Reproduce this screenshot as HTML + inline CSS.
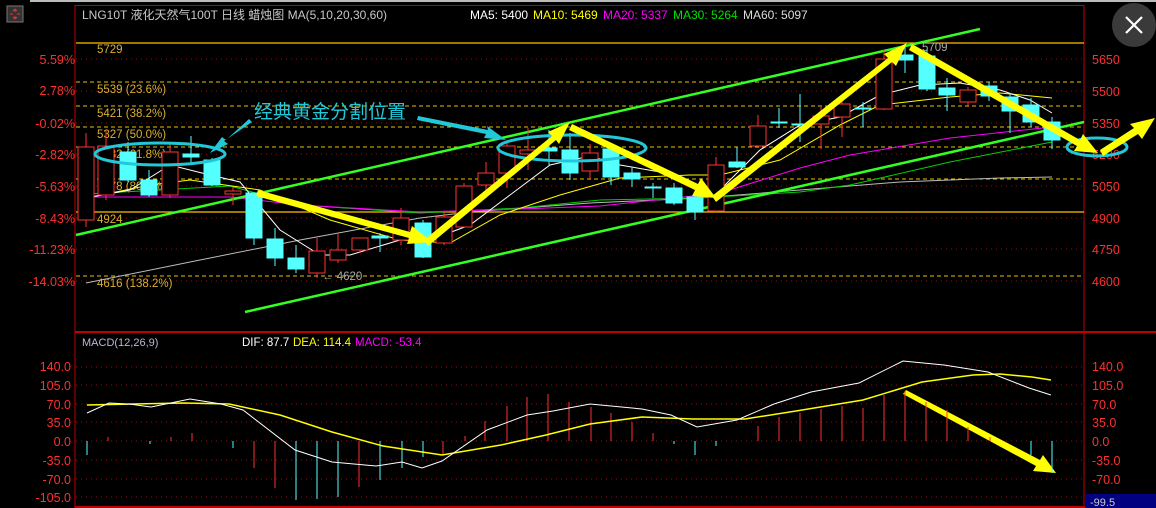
<!DOCTYPE html>
<html><head><meta charset="utf-8"><style>
html,body{margin:0;padding:0;background:#000;width:1156px;height:508px;overflow:hidden}
svg{display:block}
text{font-family:"Liberation Sans","Noto Sans CJK SC",sans-serif}
</style></head><body>
<svg width="1156" height="508" viewBox="0 0 1156 508" xmlns="http://www.w3.org/2000/svg">
<rect width="1156" height="508" fill="#000"/>
<rect x="30" y="0" width="1126" height="2" fill="#bbb"/>
<!-- left icon -->
<rect x="7" y="6" width="16" height="16" fill="#333" stroke="#777"/>
<path d="M15 9v3M15 16v3M10 14h3M17 14h3M15 9l-2 2M15 9l2 2M15 19l-2-2M15 19l2-2" stroke="#e33" stroke-width="1" fill="none"/>
<!-- borders -->
<g stroke="#c00000" fill="none">
<line x1="75" y1="5" x2="75" y2="508"/>
<line x1="1084" y1="5" x2="1084" y2="508"/>
<line x1="75" y1="5.5" x2="1084" y2="5.5"/>
<line x1="75" y1="332" x2="1156" y2="332" stroke-width="2"/>
<line x1="75" y1="507" x2="1156" y2="507" stroke-width="2"/>
</g>
<!-- red dotted grid -->
<g stroke="#b00000" stroke-dasharray="1,4" stroke-width="1">
<line x1="76" y1="59" x2="1084" y2="59"/><line x1="76" y1="91" x2="1084" y2="91"/>
<line x1="76" y1="123" x2="1084" y2="123"/><line x1="76" y1="154" x2="1084" y2="154"/>
<line x1="76" y1="186" x2="1084" y2="186"/><line x1="76" y1="218" x2="1084" y2="218"/>
<line x1="76" y1="249" x2="1084" y2="249"/><line x1="76" y1="281" x2="1084" y2="281"/>
<line x1="76" y1="367" x2="1084" y2="367"/><line x1="76" y1="385" x2="1084" y2="385"/>
<line x1="76" y1="404" x2="1084" y2="404"/><line x1="76" y1="422" x2="1084" y2="422"/>
<line x1="76" y1="441" x2="1084" y2="441"/><line x1="76" y1="460" x2="1084" y2="460"/>
<line x1="76" y1="479" x2="1084" y2="479"/><line x1="76" y1="497" x2="1084" y2="497"/>
</g>
<!-- fib lines -->
<g stroke="#ffc000" stroke-width="1.2">
<line x1="76" y1="43" x2="1084" y2="43"/><line x1="76" y1="212" x2="1084" y2="212"/>
</g>
<g stroke="#e8c000" stroke-dasharray="4,3" stroke-width="1">
<line x1="76" y1="82" x2="1084" y2="82"/><line x1="76" y1="106" x2="1084" y2="106"/>
<line x1="76" y1="127" x2="1084" y2="127"/><line x1="76" y1="147" x2="1084" y2="147"/>
<line x1="76" y1="179" x2="1084" y2="179"/><line x1="76" y1="276" x2="1084" y2="276"/>
</g>
<g font-size="11.5" fill="#d8b030">
<text x="97" y="53">5729</text><text x="97" y="93">5539 (23.6%)</text>
<text x="97" y="117">5421 (38.2%)</text><text x="97" y="138">5327 (50.0%)</text>
<text x="97" y="158">5232 (61.8%)</text><text x="97" y="190">5078 (80.9%)</text>
<text x="97" y="223">4924</text><text x="97" y="287">4616 (138.2%)</text>
</g>
<text x="322" y="280" font-size="11.5" fill="#aaa">← 4620</text>
<text x="922" y="51" font-size="11.5" fill="#aaa">5709</text>
<!-- axis labels -->
<g font-size="12.5" fill="#ff3030" text-anchor="end">
<text x="75" y="64">5.59%</text><text x="75" y="95">2.78%</text><text x="75" y="128">-0.02%</text>
<text x="75" y="159">-2.82%</text><text x="75" y="191">-5.63%</text><text x="75" y="223">-8.43%</text>
<text x="75" y="254">-11.23%</text><text x="75" y="286">-14.03%</text>
<text x="71" y="371">140.0</text><text x="71" y="390">105.0</text><text x="71" y="409">70.0</text>
<text x="71" y="427">35.0</text><text x="71" y="446">0.0</text><text x="71" y="465">-35.0</text>
<text x="71" y="484">-70.0</text><text x="71" y="502">-105.0</text>
</g>
<g font-size="12.5" fill="#ff3030">
<text x="1092" y="64">5650</text><text x="1092" y="96">5500</text><text x="1092" y="128">5350</text>
<text x="1092" y="159">5200</text><text x="1092" y="191">5050</text><text x="1092" y="223">4900</text>
<text x="1092" y="254">4750</text><text x="1092" y="286">4600</text>
<text x="1092" y="371">140.0</text><text x="1092" y="390">105.0</text><text x="1092" y="409">70.0</text>
<text x="1092" y="427">35.0</text><text x="1092" y="446">0.0</text><text x="1092" y="465">-35.0</text>
<text x="1092" y="484">-70.0</text>
</g>
<rect x="1085" y="494" width="71" height="14" fill="#000080"/>
<text x="1090" y="506" font-size="11" fill="#ccc">-99.5</text>
<!-- header -->
<text x="82" y="19" font-size="12" fill="#c8c8c8">LNG10T 液化天然气100T 日线  蜡烛图 MA(5,10,20,30,60)</text>
<g font-size="12">
<text x="470" y="19" fill="#fff">MA5:  5400</text>
<text x="533" y="19" fill="#ffff00">MA10:  5469</text>
<text x="603" y="19" fill="#ff00ff">MA20:  5337</text>
<text x="673" y="19" fill="#00e000">MA30:  5264</text>
<text x="743" y="19" fill="#ddd">MA60:  5097</text>
</g>
<!-- close button -->
<circle cx="1134" cy="25" r="22" fill="#3a3a3a"/>
<path d="M1126 17l16 16M1142 17l-16 16" stroke="#fff" stroke-width="2.2"/>
<!-- MA lines -->
<polyline fill="none" stroke="#bbb" stroke-width="1" points="86,283 200,260 300,240 420,218 470,212 590,203 700,198 800,190 900,182 1000,178 1052,177"/>
<polyline fill="none" stroke="#00d000" stroke-width="1" points="86,194 230,186 300,205 420,213 520,208 600,200 700,198 800,192 850,185 950,162 1052,142"/>
<polyline fill="none" stroke="#ff00ff" stroke-width="1" points="86,197 230,197 300,205 420,212 520,209 600,206 720,193 800,168 850,155 950,138 1052,127"/>
<polyline fill="none" stroke="#ffff00" stroke-width="1" points="86,198 150,185 190,180 260,190 330,220 400,240 450,243 500,215 560,195 620,178 690,175 720,175 780,160 840,125 880,105 950,97 1000,93 1052,98"/>
<polyline fill="none" stroke="#fff" stroke-width="1" points="86,198 130,190 170,165 210,175 240,182 280,230 320,255 350,255 400,240 430,240 470,225 510,195 550,165 590,156 620,165 660,172 700,190 720,190 760,150 800,125 840,117 880,95 920,85 960,83 1000,90 1030,100 1052,113"/>
<!-- channel lines -->
<g stroke="#33ff22" stroke-width="2.5">
<line x1="76" y1="235" x2="980" y2="29"/>
<line x1="245" y1="312" x2="1084" y2="122"/>
</g>
<!-- candles -->
<g stroke="#ff3232" stroke-width="1" fill="#000">
<line x1="86" y1="133" x2="86" y2="227"/><rect x="78" y="147" width="16" height="73"/>
<line x1="106" y1="130" x2="106" y2="200"/><rect x="98" y="146" width="16" height="49"/>
<line x1="170" y1="143" x2="170" y2="198"/><rect x="162" y="152" width="16" height="43"/>
<line x1="233" y1="187" x2="233" y2="205"/><rect x="225" y="191" width="16" height="3"/>
<line x1="317" y1="238" x2="317" y2="278"/><rect x="309" y="251" width="16" height="22"/>
<line x1="338" y1="233" x2="338" y2="263"/><rect x="330" y="250" width="16" height="10"/>
<line x1="360" y1="238" x2="360" y2="253"/><rect x="352" y="238" width="16" height="12"/>
<line x1="401" y1="208" x2="401" y2="245"/><rect x="393" y="218" width="16" height="22"/>
<line x1="444" y1="211" x2="444" y2="245"/><rect x="436" y="217" width="16" height="26"/>
<line x1="464" y1="183" x2="464" y2="227"/><rect x="456" y="186" width="16" height="41"/>
<line x1="486" y1="162" x2="486" y2="198"/><rect x="478" y="173" width="16" height="12"/>
<line x1="507" y1="142" x2="507" y2="188"/><rect x="499" y="146" width="16" height="27"/>
<line x1="528" y1="128" x2="528" y2="170"/><rect x="520" y="150" width="16" height="4"/>
<line x1="590" y1="144" x2="590" y2="180"/><rect x="582" y="153" width="16" height="18"/>
<line x1="716" y1="157" x2="716" y2="212"/><rect x="708" y="165" width="16" height="46"/>
<line x1="758" y1="115" x2="758" y2="148"/><rect x="750" y="126" width="16" height="20"/>
<line x1="821" y1="107" x2="821" y2="149"/><rect x="813" y="116" width="16" height="8"/>
<line x1="842" y1="95" x2="842" y2="137"/><rect x="834" y="104" width="16" height="13"/>
<line x1="884" y1="50" x2="884" y2="110"/><rect x="876" y="59" width="16" height="50"/>
<line x1="968" y1="87" x2="968" y2="107"/><rect x="960" y="90" width="16" height="12"/>
</g>
<g stroke="#54ffff" stroke-width="1" fill="#54ffff">
<line x1="128" y1="142" x2="128" y2="182"/><rect x="120" y="152" width="16" height="28"/>
<line x1="149" y1="170" x2="149" y2="197"/><rect x="141" y="180" width="16" height="15"/>
<line x1="191" y1="136" x2="191" y2="163"/><rect x="183" y="154" width="16" height="3"/>
<line x1="212" y1="158" x2="212" y2="186"/><rect x="204" y="160" width="16" height="25"/>
<line x1="254" y1="193" x2="254" y2="245"/><rect x="246" y="193" width="16" height="45"/>
<line x1="275" y1="228" x2="275" y2="266"/><rect x="267" y="239" width="16" height="19"/>
<line x1="296" y1="245" x2="296" y2="273"/><rect x="288" y="258" width="16" height="11"/>
<line x1="380" y1="233" x2="380" y2="252"/><rect x="372" y="236" width="16" height="2"/>
<line x1="423" y1="220" x2="423" y2="258"/><rect x="415" y="223" width="16" height="34"/>
<line x1="549" y1="130" x2="549" y2="165"/><rect x="541" y="148" width="16" height="3"/>
<line x1="570" y1="133" x2="570" y2="180"/><rect x="562" y="150" width="16" height="23"/>
<line x1="611" y1="145" x2="611" y2="185"/><rect x="603" y="149" width="16" height="28"/>
<line x1="632" y1="167" x2="632" y2="187"/><rect x="624" y="173" width="16" height="6"/>
<line x1="653" y1="183" x2="653" y2="198"/><rect x="645" y="187" width="16" height="1"/>
<line x1="674" y1="183" x2="674" y2="205"/><rect x="666" y="188" width="16" height="15"/>
<line x1="695" y1="195" x2="695" y2="220"/><rect x="687" y="197" width="16" height="15"/>
<line x1="737" y1="147" x2="737" y2="168"/><rect x="729" y="162" width="16" height="5"/>
<line x1="779" y1="108" x2="779" y2="128"/><rect x="771" y="122" width="16" height="1"/>
<line x1="800" y1="94" x2="800" y2="142"/><rect x="792" y="124" width="16" height="1"/>
<line x1="863" y1="102" x2="863" y2="127"/><rect x="855" y="108" width="16" height="1"/>
<line x1="905" y1="47" x2="905" y2="73"/><rect x="897" y="55" width="16" height="5"/>
<line x1="927" y1="50" x2="927" y2="91"/><rect x="919" y="56" width="16" height="33"/>
<line x1="947" y1="78" x2="947" y2="111"/><rect x="939" y="88" width="16" height="7"/>
<line x1="989" y1="82" x2="989" y2="101"/><rect x="981" y="86" width="16" height="10"/>
<line x1="1010" y1="93" x2="1010" y2="133"/><rect x="1002" y="97" width="16" height="14"/>
<line x1="1031" y1="98" x2="1031" y2="127"/><rect x="1023" y="105" width="16" height="17"/>
<line x1="1052" y1="117" x2="1052" y2="149"/><rect x="1044" y="122" width="16" height="18"/>
</g>
<!-- ellipses -->
<g fill="none" stroke="#22c8d8" stroke-width="3">
<ellipse cx="160" cy="154" rx="65" ry="11"/>
<ellipse cx="572" cy="148" rx="74" ry="13"/>
<ellipse cx="1097" cy="147" rx="30" ry="9"/>
</g>
<!-- cyan callouts -->
<text x="254" y="118" font-size="19" fill="#22c8d8">经典黄金分割位置</text>
<path d="M252 122 L224 141 L228 144 L210 153 L222 137 L226 140 L249 119Z" fill="#22c8d8"/>
<path d="M418 116 L488 130 L487 126 L506 140 L484 138 L486 134 L417 120Z" fill="#22c8d8"/>
<!-- yellow arrows -->
<g fill="#ffff00">
<path d="M258 190 L410 232 L412 226 L432 242 L407 244 L409 238 L256 196Z"/>
<path d="M424 240 L552 136 L548 132 L570 122 L559 144 L556 140 L428 246Z"/>
<path d="M572 124 L698 184 L701 178 L716 198 L692 196 L695 190 L569 130Z"/>
<path d="M712 196 L888 58 L884 54 L907 43 L896 66 L892 62 L716 202Z"/>
<path d="M912 44 L1080 140 L1083 134 L1098 153 L1074 151 L1077 146 L909 50Z"/>
<path d="M1100 150 L1134 128 L1130 124 L1155 118 L1142 139 L1138 134 L1103 156Z"/>
<path d="M906 390 L1040 460 L1043 455 L1056 473 L1033 471 L1036 466 L903 394Z"/>
</g>
<!-- MACD -->
<text x="82" y="346" font-size="11" fill="#b8b8d8">MACD(12,26,9)</text>
<text x="242" y="346" font-size="11.5" fill="#fff">DIF: 87.7</text>
<text x="293" y="346" font-size="11.5" fill="#ffff00">DEA: 114.4</text>
<text x="355" y="346" font-size="11.5" fill="#ff00ff">MACD: -53.4</text>
<g stroke="#ff3030" stroke-width="1">
<line x1="108" y1="441" x2="108" y2="437"/><line x1="171" y1="441" x2="171" y2="437"/>
<line x1="192" y1="441" x2="192" y2="433"/>
<line x1="254" y1="441" x2="254" y2="468"/><line x1="275" y1="441" x2="275" y2="488"/>
<line x1="359" y1="441" x2="359" y2="487"/><line x1="443" y1="441" x2="443" y2="454"/>
<line x1="465" y1="441" x2="465" y2="436"/><line x1="485" y1="441" x2="485" y2="421"/>
<line x1="507" y1="441" x2="507" y2="406"/><line x1="527" y1="441" x2="527" y2="397"/>
<line x1="548" y1="441" x2="548" y2="394"/><line x1="569" y1="441" x2="569" y2="402"/>
<line x1="591" y1="441" x2="591" y2="407"/><line x1="611" y1="441" x2="611" y2="413"/>
<line x1="632" y1="441" x2="632" y2="422"/><line x1="653" y1="441" x2="653" y2="433"/>
<line x1="758" y1="441" x2="758" y2="426"/><line x1="779" y1="441" x2="779" y2="417"/>
<line x1="800" y1="441" x2="800" y2="413"/><line x1="821" y1="441" x2="821" y2="409"/>
<line x1="842" y1="441" x2="842" y2="406"/><line x1="863" y1="441" x2="863" y2="408"/>
<line x1="884" y1="441" x2="884" y2="395"/><line x1="905" y1="441" x2="905" y2="391"/>
<line x1="926" y1="441" x2="926" y2="402"/><line x1="947" y1="441" x2="947" y2="410"/>
<line x1="968" y1="441" x2="968" y2="427"/><line x1="990" y1="441" x2="990" y2="437"/>
</g>
<g stroke="#54ffff" stroke-width="1">
<line x1="87" y1="441" x2="87" y2="455"/><line x1="150" y1="441" x2="150" y2="444"/>
<line x1="233" y1="441" x2="233" y2="448"/>
<line x1="296" y1="441" x2="296" y2="500"/><line x1="317" y1="441" x2="317" y2="499"/>
<line x1="338" y1="441" x2="338" y2="497"/><line x1="380" y1="441" x2="380" y2="480"/>
<line x1="402" y1="441" x2="402" y2="468"/><line x1="423" y1="441" x2="423" y2="457"/>
<line x1="674" y1="441" x2="674" y2="444"/><line x1="695" y1="441" x2="695" y2="455"/>
<line x1="716" y1="441" x2="716" y2="446"/><line x1="1031" y1="441" x2="1031" y2="455"/>
<line x1="1052" y1="441" x2="1052" y2="473"/>
</g>
<polyline fill="none" stroke="#ffff00" stroke-width="1.5" points="87,405 184,403 229,404 280,415 332,432 383,446 442,455 501,445 546,435 590,424 642,417 693,419 745,419 796,411 863,400 922,382 973,375 1000,374 1032,377 1051,380"/>
<polyline fill="none" stroke="#fff" stroke-width="1" points="87,413 109,403 129,404 151,407 190,399 221,404 243,410 295,450 332,462 376,466 402,462 422,468 442,461 487,430 527,415 553,411 590,404 642,409 671,415 697,427 737,420 774,404 811,392 859,383 903,361 944,365 988,372 1029,388 1051,395"/>
</svg>
</body></html>
